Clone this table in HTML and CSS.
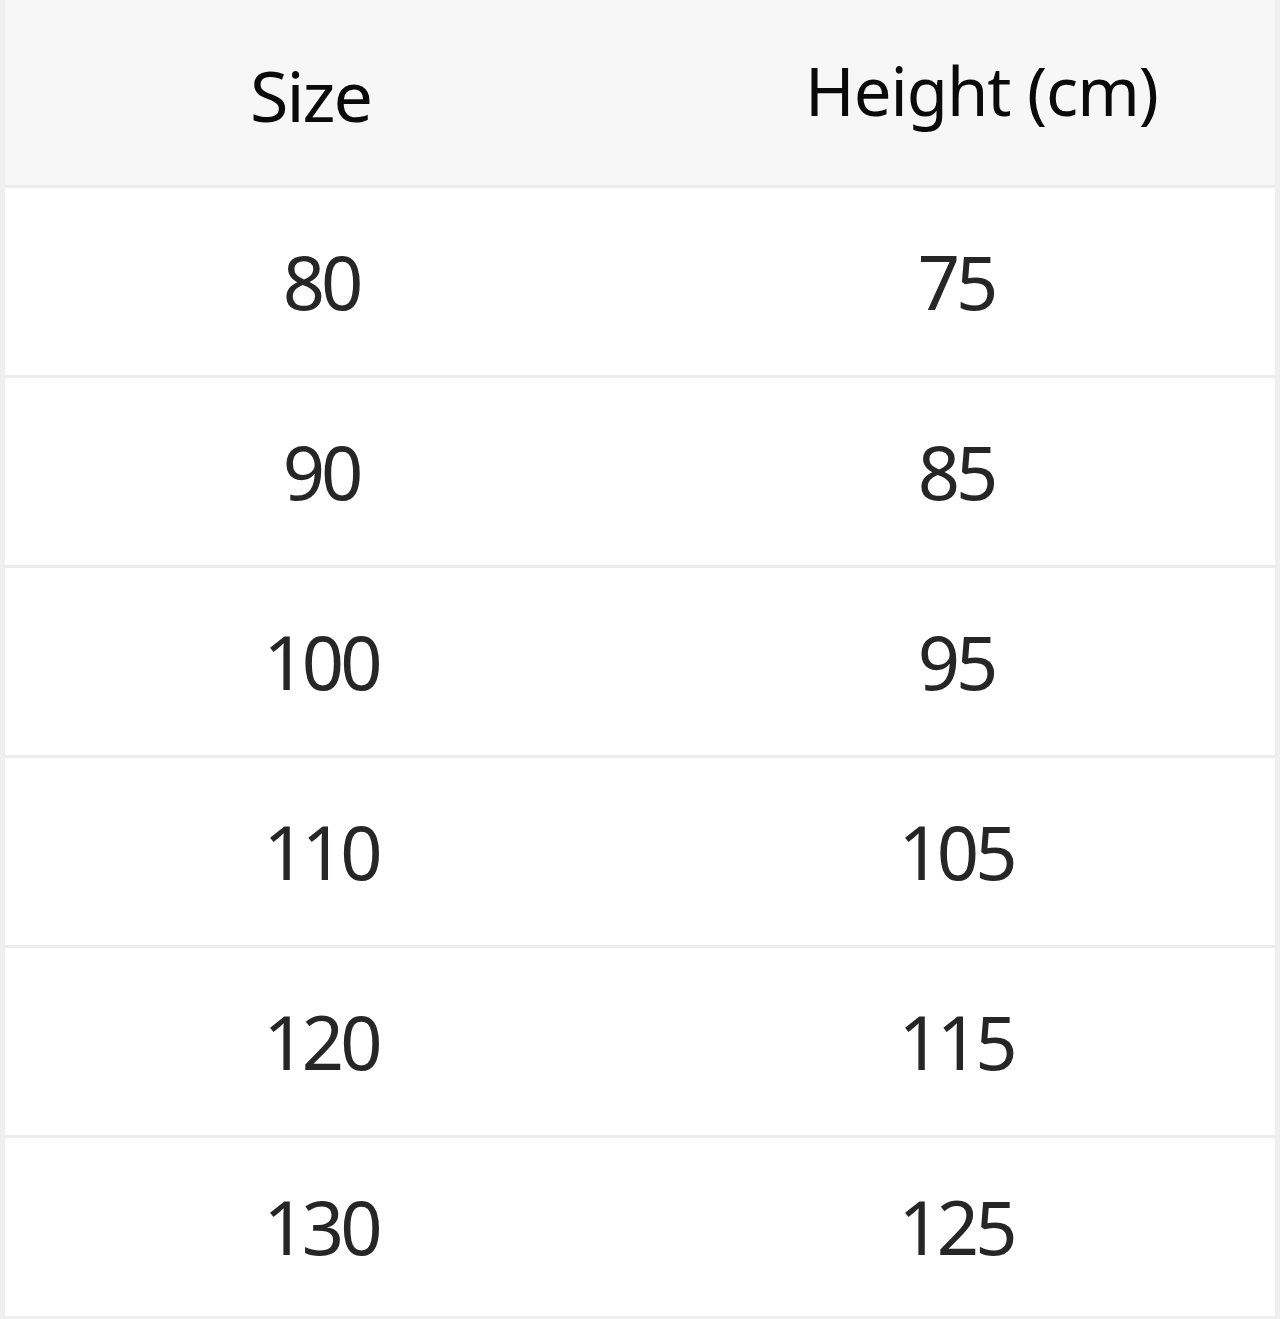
FILE: index.html
```html
<!DOCTYPE html>
<html>
<head>
<meta charset="utf-8">
<link rel="stylesheet" href="styles.css">
</head>
<body>
<div class="table">
  <div class="row head">
    <div class="cell c1">Size</div>
    <div class="cell c2">Height (cm)</div>
  </div>
  <div class="row"><div class="cell">80</div><div class="cell">75</div></div>
  <div class="row"><div class="cell">90</div><div class="cell">85</div></div>
  <div class="row"><div class="cell">100</div><div class="cell">95</div></div>
  <div class="row"><div class="cell">110</div><div class="cell">105</div></div>
  <div class="row"><div class="cell">120</div><div class="cell">115</div></div>
  <div class="row last"><div class="cell">130</div><div class="cell">125</div></div>
</div>
</body>
</html>
```
FILE: styles.css
```css
html, body {
  margin: 0;
  padding: 0;
  background: #ffffff;
}
.table {
  width: 1280px;
  height: 1319px;
  box-sizing: border-box;
  border-left: 5px solid #efefef;
  border-right: 5px solid #efefef;
  border-bottom: 3px solid #efefef;
  display: flex;
  flex-direction: column;
  font-family: "Noto Sans", "Open Sans", sans-serif;
}
.row {
  display: grid;
  grid-template-columns: 1fr 1fr;
  height: 187px;
  border-bottom: 3px solid #ececec;
  align-items: center;
  color: #262626;
  font-size: 74px;
  letter-spacing: -4px;
}
.row.last {
  flex: 1;
  border-bottom: none;
}
.head {
  background: #f7f7f7;
  height: 185px;
  color: #0a0a0a;
}
.cell {
  text-align: center;
  line-height: 1;
  padding-right: 3px;
}
.head .c1 {
  font-size: 70px;
  letter-spacing: -2px;
  padding-right: 24px;
  padding-top: 4px;
}
.head .c2 {
  font-size: 67px;
  letter-spacing: -1px;
  padding-left: 48px;
  padding-right: 0;
  padding-bottom: 4px;
}
```
